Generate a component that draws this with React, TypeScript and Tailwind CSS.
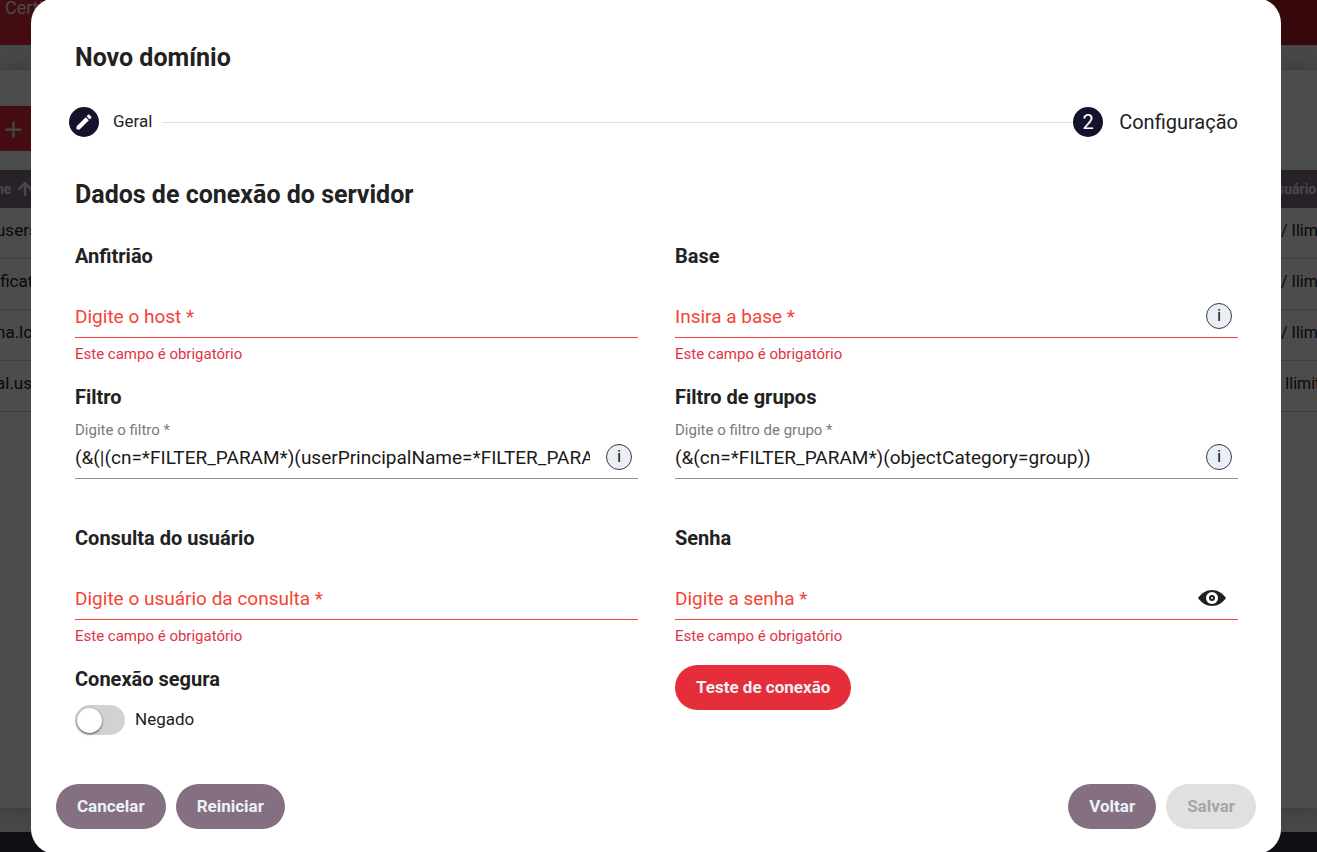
import { useState } from "react";
import type { ReactNode } from "react";
import { ArrowUp } from "lucide-react";
import { MdAdd, MdEdit } from "react-icons/md";

const ROWS = [
  { name: "users", limit: "/ Ilimitado" },
  { name: "ificat", limit: "/ Ilimitado" },
  { name: "na.lo", limit: "/ Ilimitado" },
  { name: "al.use", limit: "\u00a0Ilimitado" },
];

const PURPLE_BUTTON = "h-[45px] rounded-full bg-[#857082] px-[21px] text-[17px] font-bold text-[#eef1f6]";

function EyeIcon() {
  return (
    <svg width="28" height="16" viewBox="0 0 28 16" aria-hidden="true">
      <path d="M0 8C3.500 3 8.400 0 14 0s10.500 3 14 8c-3.500 5-8.400 8-14 8S3.500 13 0 8z" fill="#212121" />
      <circle cx="14" cy="8" r="6" fill="#fff" />
      <circle cx="14" cy="8" r="3" fill="#212121" />
      <circle cx="14" cy="8" r="1" fill="#fff" />
    </svg>
  );
}

function InfoButton() {
  return (
    <button
      type="button"
      className="mr-[6px] flex size-[26px] shrink-0 items-center justify-center rounded-full border border-[#3a3550] bg-[#e9eff2] text-[17px] text-[#15152a]"
    >
      i
    </button>
  );
}

function Field({
  id,
  title,
  hint,
  value,
  type = "text",
  action,
}: {
  id: string;
  title: string;
  hint: string;
  value?: string;
  type?: string;
  action?: ReactNode;
}) {
  const [text, setText] = useState(value ?? "");
  const invalid = text === "";

  return (
    <div className="h-[141px] min-w-0">
      <label htmlFor={id} className="block text-[20px] leading-7 font-bold">
        {title}
      </label>
      <div
        className={
          invalid
            ? "flex h-[68px] flex-col justify-end border-b border-[#f44336] pb-[3px]"
            : "flex h-[68px] flex-col justify-end border-b border-[#949494] pb-[3px]"
        }
      >
        {!invalid && <span className="text-[15px] leading-[18px] text-[#7a7a7a]">{hint}</span>}
        <div className="flex h-9 items-center gap-4">
          <input
            id={id}
            type={type}
            value={text}
            placeholder={hint}
            onChange={(e) => setText(e.target.value)}
            className="h-9 min-w-0 flex-1 text-[19px] text-[#1a1a1a] outline-none placeholder:text-[#f44336]"
          />
          {action}
        </div>
      </div>
      {invalid && <p className="mt-[6px] text-[15px] leading-5 text-[#dc3545]">Este campo é obrigatório</p>}
    </div>
  );
}

// Domain list that stays visible around the dialog
function DomainList() {
  return (
    <div className="flex h-screen flex-col overflow-hidden bg-[#e9eeef]">
      <header className="h-[45px] shrink-0 bg-linear-to-r from-[#df2b3c] to-[#b41b25] px-[5px] text-[18px] leading-4 text-[#eef1f6]">
        Certi
      </header>
      <main className="mt-[25px] mb-6 flex-1 bg-white pt-9 shadow-[0_0_16px_rgba(0,0,0,0.2)]">
        <button
          type="button"
          aria-label="Novo"
          className="flex h-[45px] w-12 items-center bg-[#e62e3b] pt-[2px] text-[#eef1f6]"
        >
          <MdAdd size={27} />
        </button>
        <table className="mt-[19px] w-full table-fixed border-separate border-spacing-0 text-left whitespace-nowrap">
          <thead className="bg-[#857082] text-[14px] text-[#eef1f6]">
            <tr className="h-[38px]">
              <th>
                <span className="-ml-1 flex items-center gap-1">
                  ne
                  <ArrowUp size={20} strokeWidth={3} />
                </span>
              </th>
              <th className="w-9 overflow-hidden">
                <span className="-ml-1">suário</span>
              </th>
            </tr>
          </thead>
          <tbody className="text-[17px] text-[#222]">
            {ROWS.map((row) => (
              <tr key={row.name} className="h-[51px]">
                <td className="border-b border-[#cfcfcf] pb-1">
                  <span className="-ml-1">{row.name}</span>
                </td>
                <td className="overflow-hidden border-b border-[#cfcfcf] pb-1 text-[16px]">{row.limit}</td>
              </tr>
            ))}
          </tbody>
        </table>
      </main>
      <footer className="h-5 shrink-0 bg-[#353843]" />
    </div>
  );
}

export default function App() {
  const [secure, setSecure] = useState(false);

  return (
    <div className="font-[Roboto,'Liberation_Sans',sans-serif] text-[#222]">
      <DomainList />
      <div className="fixed inset-0 flex items-center justify-center overflow-hidden bg-black/70 pr-9 pl-[31px]">
        <div role="dialog" aria-labelledby="dialog-title" className="w-full shrink-0 rounded-[25px] bg-white pt-11 pb-[25px]">
          <div className="pr-[43px] pl-11">
            <h1 id="dialog-title" className="text-[25px] leading-8 font-bold">
              Novo domínio
            </h1>

            <div className="mt-[33px] -ml-[6px] flex items-center">
              <span className="flex size-[30px] items-center justify-center rounded-full bg-[#15132b] text-white">
                <MdEdit size={20} />
              </span>
              <span className="ml-[14px] text-[17px]">Geral</span>
              <span className="ml-[10px] h-px flex-1 bg-[#e0e0e0]" />
              <span className="flex size-[30px] items-center justify-center rounded-full bg-[#15132b] text-[20px] text-white">
                2
              </span>
              <span className="ml-4 text-[20px]">Configuração</span>
            </div>

            <h2 className="mt-[42px] text-[25px] leading-8 font-bold">Dados de conexão do servidor</h2>

            <form className="mt-[31px] grid grid-cols-2 gap-x-[37px]">
              <Field id="host" title="Anfitrião" hint="Digite o host *" />
              <Field id="base" title="Base" hint="Insira a base *" action={<InfoButton />} />
              <Field
                id="filter"
                title="Filtro"
                hint="Digite o filtro *"
                value="(&(|(cn=*FILTER_PARAM*)(userPrincipalName=*FILTER_PARAM*))"
                action={<InfoButton />}
              />
              <Field
                id="group-filter"
                title="Filtro de grupos"
                hint="Digite o filtro de grupo *"
                value="(&(cn=*FILTER_PARAM*)(objectCategory=group))"
                action={<InfoButton />}
              />
              <Field id="query-user" title="Consulta do usuário" hint="Digite o usuário da consulta *" />
              <Field
                id="password"
                title="Senha"
                hint="Digite a senha *"
                type="password"
                action={
                  <button type="button" aria-label="Mostrar senha" className="mr-3">
                    <EyeIcon />
                  </button>
                }
              />
              <div>
                <p className="text-[20px] leading-7 font-bold">Conexão segura</p>
                <label className="mt-3 flex items-center gap-[10px] text-[17px]">
                  <input
                    type="checkbox"
                    role="switch"
                    checked={secure}
                    onChange={(e) => setSecure(e.target.checked)}
                    className="flex h-[30px] w-[50px] appearance-none items-center rounded-full bg-[#d2d2d2] px-[2px] before:size-[25px] before:rounded-full before:bg-white before:shadow-sm before:shadow-black/50 checked:justify-end checked:bg-[#e62e3b]"
                  />
                  {secure ? "Permitido" : "Negado"}
                </label>
              </div>
              <div>
                <button type="button" className="h-[45px] rounded-full bg-[#e62e3b] px-[21px] text-[17px] font-bold text-[#eef1f6]">
                  Teste de conexão
                </button>
              </div>
            </form>
          </div>

          <div className="mt-[49px] flex gap-[10px] px-[25px]">
            <button type="button" className={PURPLE_BUTTON}>
              Cancelar
            </button>
            <button type="button" className={PURPLE_BUTTON}>
              Reiniciar
            </button>
            <button type="button" className={`${PURPLE_BUTTON} ml-auto`}>
              Voltar
            </button>
            <button type="button" disabled className="h-[45px] rounded-full bg-[#e0e0e0] px-[21px] text-[17px] font-bold text-[#a6a6a6]">
              Salvar
            </button>
          </div>
        </div>
      </div>
    </div>
  );
}
